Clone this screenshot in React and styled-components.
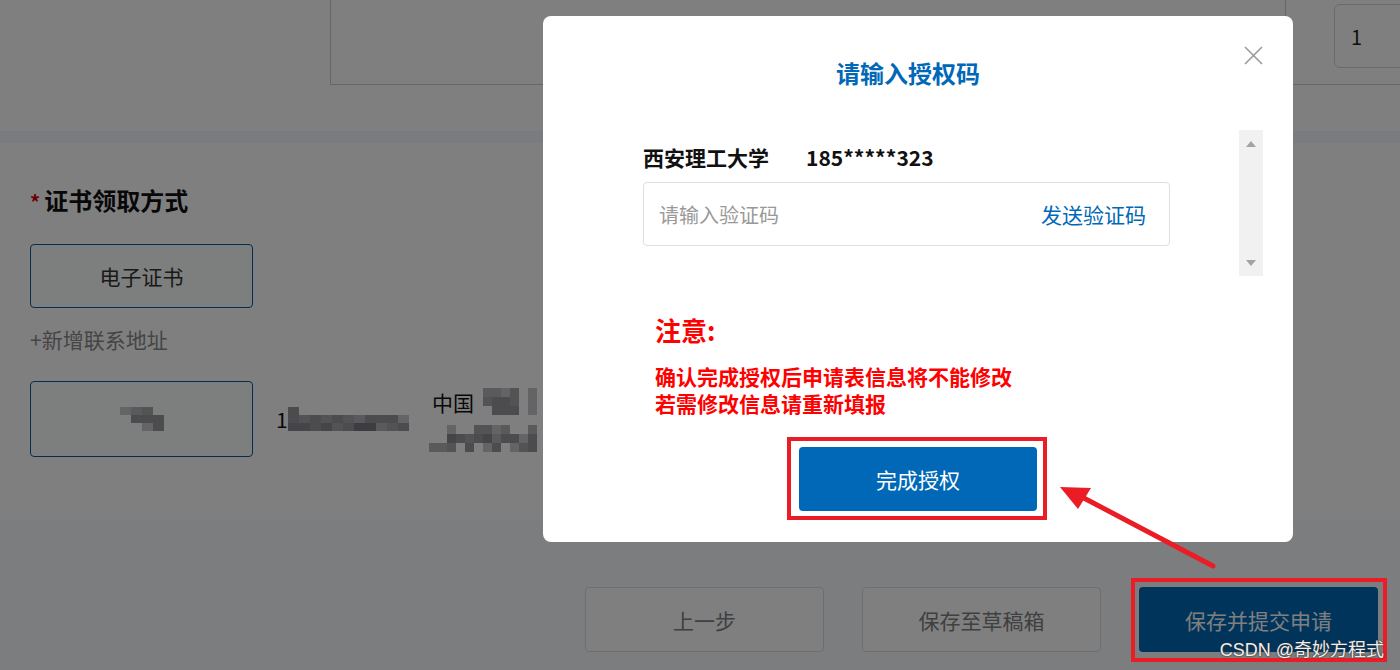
import React from "react";
import styled, { createGlobalStyle } from "styled-components";

const GlobalStyle = createGlobalStyle`
  html, body {
    margin: 0;
    padding: 0;
    overflow: hidden;
    background: #fff;
  }
  body {
    font-family: "Noto Sans CJK SC", "Noto Sans", "Liberation Sans", sans-serif;
  }
  * {
    box-sizing: border-box;
  }
`;

const Page = styled.div`
  position: relative;
  width: 1400px;
  height: 670px;
  overflow: hidden;
  background: #fff;
  color: #333;
`;

const TopTable = styled.div`
  display: flex;
  align-items: flex-start;
  height: 131px;
  padding-left: 330px;
  overflow: hidden;
`;

const TopCell = styled.div`
  flex: 0 0 956px;
  height: 85px;
  border: 1px solid #cdcdcd;
  border-top: none;
`;

const QtyCell = styled.div`
  flex: 0 0 300px;
  height: 85px;
  border-bottom: 1px solid #cdcdcd;
  padding: 4px 0 0 48px;
`;

const QtyInput = styled.div`
  width: 120px;
  height: 64px;
  border: 1px solid #d6d6d6;
  border-radius: 6px;
  display: flex;
  align-items: center;
  padding-left: 16px;
  font-size: 20px;
  color: #222;
`;

const Divider = styled.div`
  height: 12px;
  background: #f4f6fc;
`;

const Section = styled.div`
  height: 377px;
  padding: 40px 30px 0;
`;

const Heading = styled.h3`
  margin: 0;
  font-size: 24px;
  line-height: 30px;
  font-weight: 700;
  color: #111;
  display: flex;
  align-items: center;
`;

const Star = styled.span`
  color: #d40000;
  font-size: 20px;
  margin-right: 4px;
  margin-top: 4px;
`;

const OptionButton = styled.div`
  width: 223px;
  height: ${(p) => (p.tall ? "76px" : "64px")};
  margin-top: ${(p) => (p.tall ? "0" : "27px")};
  border: 1px solid #0a5aa0;
  border-radius: 4px;
  display: flex;
  align-items: center;
  justify-content: center;
  font-size: 21px;
  color: #333;
  background: #fafdfd;
`;

const AddLink = styled.div`
  margin-top: 17px;
  font-size: 21px;
  line-height: 28px;
  color: #8a8a8a;
`;

const AddressRow = styled.div`
  margin-top: 28px;
  display: flex;
  align-items: center;
`;

const Phone = styled.div`
  margin-left: 23px;
  display: flex;
  align-items: center;
  font-size: 21px;
  color: #111;
  width: 156px;
`;

const Address = styled.div`
  display: flex;
  flex-direction: column;
  gap: 8px;
  font-size: 21px;
  color: #111;
`;

const AddressLine = styled.div`
  display: flex;
  align-items: center;
  margin-left: ${(p) => p.indent || 0}px;
`;

const BottomBar = styled.div`
  height: 150px;
  background: #f8fafe;
  display: flex;
  justify-content: flex-end;
  align-items: flex-start;
  gap: 38px;
  padding: 67px 22px 0 0;
`;

const BarButton = styled.div`
  width: 239px;
  height: 65px;
  border-radius: 4px;
  display: flex;
  align-items: center;
  justify-content: center;
  font-size: 21px;
  background: ${(p) => (p.primary ? "#0068b7" : "#fff")};
  border: ${(p) => (p.primary ? "none" : "1px solid #dcdde0")};
  color: ${(p) => (p.primary ? "#fff" : "#808080")};
`;

const Overlay = styled.div`
  position: absolute;
  inset: 0;
  background: rgba(0, 0, 0, 0.5);
`;

const Modal = styled.div`
  position: absolute;
  left: 543px;
  top: 16px;
  width: 750px;
  height: 526px;
  background: #fff;
  border-radius: 8px;
  padding-top: 42px;
`;

const ModalTitle = styled.h2`
  margin: 0;
  font-size: 24px;
  line-height: 30px;
  font-weight: 700;
  color: #0068b7;
  text-align: center;
  padding-right: 20px;
`;

const Close = styled.div`
  position: absolute;
  top: 30px;
  right: 30px;
  width: 19px;
  height: 19px;
  line-height: 0;
`;

const ScrollArea = styled.div`
  margin-top: 42px;
  height: 146px;
  display: flex;
  padding: 0 30px 0 100px;
`;

const ScrollContent = styled.div`
  flex: 1;
  padding-top: 13px;
`;

const InfoLine = styled.div`
  display: flex;
  gap: 37px;
  font-size: 21px;
  line-height: 28px;
  font-weight: 700;
  color: #111;
`;

const CodeInput = styled.div`
  margin-top: 11px;
  width: 527px;
  height: 64px;
  border: 1px solid #dcdfe6;
  border-radius: 4px;
  display: flex;
  align-items: center;
  justify-content: space-between;
  padding: 0 23px 0 15px;
  font-size: 20px;
`;

const Placeholder = styled.span`
  color: #999;
`;

const SendLink = styled.span`
  color: #0068b7;
  font-size: 21px;
`;

const Scrollbar = styled.div`
  width: 24px;
  background: #f1f1f1;
  display: flex;
  flex-direction: column;
  justify-content: space-between;
  align-items: center;
  padding: 11px 0 10px;
`;

const Arrow = styled.div`
  width: 0;
  height: 0;
  border-left: 5px solid transparent;
  border-right: 5px solid transparent;
  ${(p) =>
    p.down ? "border-top: 6px solid #a3a3a3;" : "border-bottom: 6px solid #a3a3a3;"}
`;

const Notice = styled.div`
  margin-top: 37px;
  padding-left: 112px;
  color: #ff0000;
  font-weight: 700;
`;

const NoticeTitle = styled.div`
  font-size: 26px;
  line-height: 34px;
`;

const NoticeText = styled.div`
  margin-top: 16px;
  font-size: 21px;
  line-height: 27px;
`;

const ConfirmButton = styled.div`
  margin: 30px auto 0;
  width: 238px;
  height: 64px;
  border-radius: 4px;
  background: #0068b7;
  color: #fff;
  font-size: 21px;
  display: flex;
  align-items: center;
  justify-content: center;
`;

const Annotations = styled.svg`
  position: absolute;
  inset: 0;
  pointer-events: none;
`;

const Watermark = styled.div`
  position: absolute;
  right: 16px;
  bottom: 9px;
  font-family: "Liberation Sans", "Noto Sans CJK SC", sans-serif;
  font-size: 18px;
  color: #eeeeee;
  text-shadow: 0 0 2px #333, 0 0 1px #333;
`;

const shades = {
  1: "#c8c8cc",
  2: "#b4b4ba",
  3: "#a6a4a8",
  4: "#98989e",
  5: "#8a8890",
  6: "#7a7a82",
  7: "#6a6a70",
};

// pixelated (blurred) private data
const Mosaic = ({ rows, cell = 11, h = cell }) => (
  <svg width={rows[0].length * cell} height={rows.length * h} style={{ display: "block" }}>
    {rows.map((row, y) =>
      row.split("").map((c, x) =>
        c === "0" ? null : (
          <rect key={`${x}-${y}`} x={x * cell} y={y * h} width={cell} height={h} fill={shades[c]} />
        )
      )
    )}
  </svg>
);

export default function App() {
  return (
    <>
      <GlobalStyle />
      <Page>
        <TopTable>
          <TopCell />
          <QtyCell>
            <QtyInput>1</QtyInput>
          </QtyCell>
        </TopTable>
        <Divider />
        <Section>
          <Heading>
            <Star>*</Star>证书领取方式
          </Heading>
          <OptionButton>电子证书</OptionButton>
          <AddLink>+新增联系地址</AddLink>
          <AddressRow>
            <OptionButton tall>
              <Mosaic rows={["1230", "0444", "0014"]} cell={11} h={8} />
            </OptionButton>
            <Phone>
              1
              <Mosaic rows={["40000000000", "43434324441", "55453466234"]} cell={11} h={8} />
            </Phone>
            <Address>
              <AddressLine>
                中国
                <Mosaic rows={["022130102", "034430103", "004440101"]} cell={9} h={9} />
              </AddressLine>
              <AddressLine indent={-3}>
                <Mosaic
                  rows={["001003312002", "005434524414", "223040140134"]}
                  cell={9}
                  h={9}
                />
              </AddressLine>
            </Address>
          </AddressRow>
        </Section>
        <BottomBar>
          <BarButton>上一步</BarButton>
          <BarButton>保存至草稿箱</BarButton>
          <BarButton primary>保存并提交申请</BarButton>
        </BottomBar>

        <Overlay />

        <Modal>
          <Close>
            <svg width="19" height="19" viewBox="0 0 19 19">
              <path d="M1 1L18 18M18 1L1 18" stroke="#9a9a9a" strokeWidth="1.6" />
            </svg>
          </Close>
          <ModalTitle>请输入授权码</ModalTitle>
          <ScrollArea>
            <ScrollContent>
              <InfoLine>
                <span>西安理工大学</span>
                <span>185*****323</span>
              </InfoLine>
              <CodeInput>
                <Placeholder>请输入验证码</Placeholder>
                <SendLink>发送验证码</SendLink>
              </CodeInput>
            </ScrollContent>
            <Scrollbar>
              <Arrow />
              <Arrow down />
            </Scrollbar>
          </ScrollArea>
          <Notice>
            <NoticeTitle>注意:</NoticeTitle>
            <NoticeText>
              确认完成授权后申请表信息将不能修改
              <br />
              若需修改信息请重新填报
            </NoticeText>
          </Notice>
          <ConfirmButton>完成授权</ConfirmButton>
        </Modal>

        <Annotations width="1400" height="670">
          <rect x="789" y="439" width="256" height="79" fill="none" stroke="#ea1c26" strokeWidth="4" />
          <rect x="1133" y="580" width="252" height="80" fill="none" stroke="#ea1c26" strokeWidth="4" />
          <line x1="1213" y1="566" x2="1080" y2="496" stroke="#ea1c26" strokeWidth="5" strokeLinecap="round" />
          <polygon points="1060,487 1091,488 1078,509" fill="#ea1c26" />
        </Annotations>
        <Watermark>CSDN @奇妙方程式</Watermark>
      </Page>
    </>
  );
}
